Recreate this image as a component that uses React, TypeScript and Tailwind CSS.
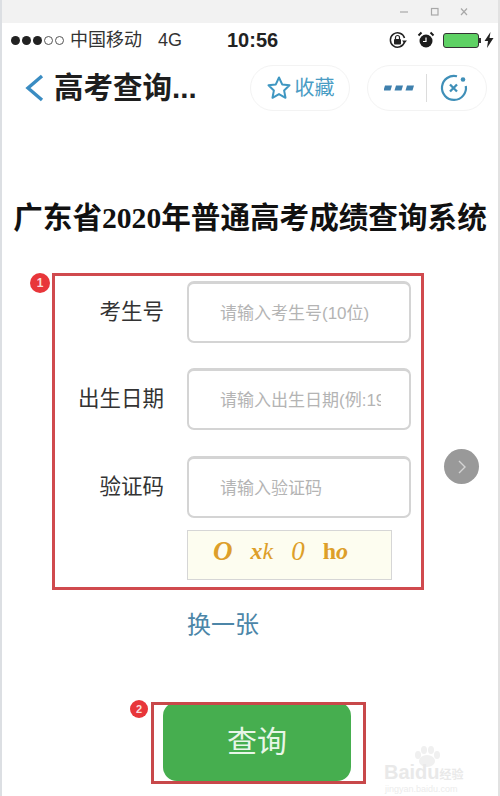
import React from "react";

const cjk = "font-['Liberation_Sans','Noto_Sans_CJK_SC',sans-serif]";

function Field({ label, placeholder, mt }: { label: string; placeholder: string; mt: string }) {
  return (
    <div className={`flex items-center ${mt}`}>
      <div className="w-[112px] whitespace-nowrap pt-[2px] text-right text-[21.5px] leading-none text-[#333]">{label}</div>
      <div className="ml-[23px] flex h-[62px] w-[224px] items-center overflow-hidden whitespace-nowrap rounded-[7px] border-2 border-t-[3px] border-[#d4d4d4] bg-white pl-[31px] pr-[28px] pt-[2px] text-[17px] text-[#b4b4b4]">
        <span className="overflow-hidden">{placeholder}</span>
      </div>
    </div>
  );
}

export default function App() {
  return (
    <div className={`relative h-[796px] w-[500px] overflow-hidden border-r-2 border-l-2 border-r-[#e2e2e2] border-l-[#dcdfe3] bg-white ${cjk}`}>
      {/* window bar */}
      <div className="flex h-[23px] items-center justify-end bg-[#f2f2f2] pr-[11px] text-[#9a9a9a]">
        <svg width="90" height="12" viewBox="0 0 90 12" fill="none" stroke="#a8a8a8" strokeWidth="1.2">
          <path d="M3 6h8" />
          <rect x="34.5" y="2.5" width="6.5" height="6.5" />
          <path d="M64 2.5l6 6.5M70 2.5l-6 6.5" />
        </svg>
      </div>

      {/* status bar */}
      <div className="flex h-[34px] items-center pl-[9px] pr-[4px]">
        <div className="flex w-[216px] items-center text-[#333]">
          <div className="flex gap-[2px]">
            {[0, 1, 2].map((i) => (
              <span key={i} className="h-[9px] w-[9px] rounded-full bg-[#222]" />
            ))}
            {[3, 4].map((i) => (
              <span key={i} className="h-[9px] w-[9px] rounded-full border border-[#555]" />
            ))}
          </div>
          <span className="ml-[6px] text-[18px] leading-none">中国移动</span>
          <span className="ml-[16px] text-[18px] leading-none">4G</span>
        </div>
        <span className="text-[20px] font-bold text-[#222]">10:56</span>
        <div className="ml-auto flex items-center">
          <svg width="20" height="18" viewBox="0 0 20 18" fill="none">
            <path d="M16.5 11a7.2 7.2 0 1 1 0-4" stroke="#222" strokeWidth="1.5" />
            <path d="M14 9.5h5l-2.5 3z" fill="#222" />
            <rect x="6" y="8" width="7" height="5.5" rx="1" fill="#222" />
            <path d="M7.5 8V6.5a2 2 0 0 1 4 0V8" stroke="#222" strokeWidth="1.2" />
          </svg>
          <svg className="ml-[9px]" width="18" height="18" viewBox="0 0 18 18" fill="none">
            <circle cx="9" cy="10" r="6.5" fill="#1c1c1c" />
            <path d="M9 6.5V10.5H6" stroke="#fff" strokeWidth="1.2" />
            <path d="M1.5 4.5l3-3M16.5 4.5l-3-3" stroke="#1c1c1c" strokeWidth="2" />
          </svg>
          <div className="ml-[8px] flex h-[15px] w-[36px] rounded-[3px] border border-[#333] bg-[#5ed164]" />
          <span className="h-[5px] w-[2px] bg-[#333]" />
          <svg className="ml-[3px]" width="10" height="16" viewBox="0 0 10 16">
            <path d="M6.5 0L0.5 9h3.5L3 16l6.5-10H5.5z" fill="#222" />
          </svg>
        </div>
      </div>

      {/* nav bar */}
      <div className="mt-[6px] flex h-[50px] items-center pl-[22px]">
        <svg width="20" height="30" viewBox="0 0 20 30" fill="none">
          <path d="M18 3L4 15l14 12" stroke="#3a8cc2" strokeWidth="3.4" />
        </svg>
        <span className="ml-[10px] w-[142px] whitespace-nowrap text-[29.5px] font-bold leading-none text-[#1e1e1e]">高考查询...</span>
        <div className="ml-[54px] flex h-[46px] w-[100px] items-center justify-center rounded-full border border-[#f3f3f3] text-[#4a9cc4]">
          <svg width="26" height="26" viewBox="0 0 26 26" fill="none">
            <path d="M13 2.5l3.2 6.900 7.300.9-5.400 5.100 1.400 7.400-6.500-3.700-6.500 3.700 1.400-7.400-5.400-5.100 7.300-.9z" stroke="#3f97c2" strokeWidth="2" strokeLinejoin="round" />
          </svg>
          <span className="ml-[3px] text-[20px] leading-none">收藏</span>
        </div>
        <div className="ml-[17px] flex h-[46px] w-[120px] items-center rounded-full border border-[#f3f3f3] pl-[16px]">
          <svg width="31" height="8" viewBox="0 0 31 8">
            <path d="M1 1.500h7l-1.500 5h-7zM12 1.500h7l-1.500 5h-7zM23 1.500h7l-1.500 5h-7z" fill="#3f80ad" />
          </svg>
          <span className="ml-[11px] h-[28px] w-px bg-[#dcdcdc]" />
          <svg className="ml-[12px]" width="30" height="30" viewBox="0 0 30 30" fill="none">
            <path d="M18 3.300A12 12 0 1 0 26.800 13" stroke="#3f8fb8" strokeWidth="2.200" />
            <circle cx="24" cy="6.500" r="2.300" fill="#3f8fb8" />
            <path d="M11 11.500l7 7M18 11.500l-7 7" stroke="#3f8fb8" strokeWidth="2.300" />
          </svg>
        </div>
      </div>

      {/* page title */}
      <h1 className="mt-[85px] whitespace-nowrap text-center font-['Liberation_Serif','Noto_Sans_CJK_SC',serif] text-[29.6px] font-bold leading-[40px] text-[#111]">
        广东省2020年普通高考成绩查询系统
      </h1>

      {/* form */}
      <div className="mt-[43px] pl-[50px]">
        <Field label="考生号" placeholder="请输入考生号(10位)" mt="" />
        <Field label="出生日期" placeholder="请输入出生日期(例:19" mt="mt-[25px]" />
        <Field label="验证码" placeholder="请输入验证码" mt="mt-[26px]" />
        <div className="ml-[135px] mt-[12px] flex h-[50px] w-[205px] items-center gap-[18px] border border-[#d6d6d6] bg-[#fdfdf0] pb-[8px] pl-[25px] font-['Liberation_Serif',serif] text-[27px] font-bold italic leading-none text-[#dd9f2a]">
          <span>O</span>
          <span className="text-[24px]">x<span className="font-normal">k</span></span>
          <span className="font-normal">0</span>
          <span className="text-[24px] not-italic">h<span className="italic">o</span></span>
        </div>
        <div className="ml-[135px] mt-[29px] text-[24px] leading-[32px] text-[#4c86a8]">换一张</div>
      </div>

      {/* submit */}
      <button className="ml-[161px] mt-[61px] flex h-[79px] w-[188px] items-center justify-center rounded-[14px] bg-[#46ae4f] text-[30px] text-[#e8f6e8]">
        查询
      </button>

      {/* next arrow */}
      <div className="absolute left-[442px] top-[449px] flex h-[35px] w-[35px] items-center justify-center rounded-full bg-[#999]">
        <svg width="10" height="16" viewBox="0 0 10 16" fill="none">
          <path d="M2 2l6 6-6 6" stroke="#d4d4d4" strokeWidth="1.400" />
        </svg>
      </div>

      {/* annotations */}
      <div className="absolute left-[50px] top-[273px] h-[317px] w-[372px] border-[3px] border-[#d04a4e]" />
      <div className="absolute left-[28px] top-[273px] flex h-[20px] w-[20px] items-center justify-center rounded-full bg-[#e8363a] text-[12px] font-bold leading-none text-[#fbdcdc]">1</div>
      <div className="absolute left-[149px] top-[702px] h-[82px] w-[215px] border-[3px] border-[#c8484a]" />
      <div className="absolute left-[128px] top-[700px] flex h-[18px] w-[18px] items-center justify-center rounded-full bg-[#e8363a] text-[11px] font-bold leading-none text-[#fbdcdc]">2</div>

      {/* watermark */}
      <svg className="absolute left-[410px] top-[746px]" width="30" height="22" viewBox="0 0 30 22" fill="#f0f0f0">
        <ellipse cx="15" cy="15" rx="8" ry="6" />
        <ellipse cx="6" cy="9" rx="3" ry="4" />
        <ellipse cx="12" cy="4" rx="3" ry="4" />
        <ellipse cx="19" cy="4" rx="3" ry="4" />
        <ellipse cx="25" cy="9" rx="3" ry="4" />
      </svg>
      <div className="absolute left-[382px] top-[762px] text-[20px] font-bold leading-[20px] text-[#e9e9e9]">Baidu<span className="text-[12px]">经验</span></div>
      <div className="absolute left-[383px] top-[785px] text-[9px] leading-[9px] text-[#ececec]">jingyan.baidu.com</div>
    </div>
  );
}
